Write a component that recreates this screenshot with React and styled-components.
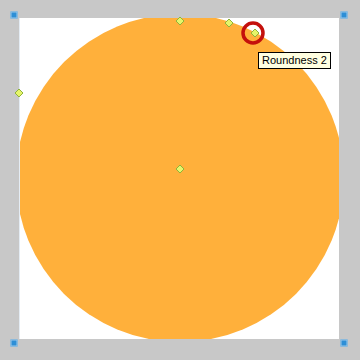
import React from 'react';
import styled, { createGlobalStyle } from 'styled-components';

const GlobalStyle = createGlobalStyle`
  html, body {
    margin: 0;
    padding: 0;
    background: #c8c8c8;
  }
`;

const Stage = styled.div`
  width: 360px;
  height: 360px;
  box-sizing: border-box;
  padding: 18px 0 0 20px;
  background: #c8c8c8;
  font-family: "Liberation Sans", "DejaVu Sans", sans-serif;
`;

const Canvas = styled.div`
  position: relative;
  width: 319px;
  height: 321px;
  background: #ffffff;
  box-shadow: -1px 0 0 #e4ecf4;
`;

const Drawing = styled.svg`
  display: block;
  width: 100%;
  height: 100%;
`;

const Overlay = styled.svg`
  position: absolute;
  left: 0;
  top: 0;
  width: 100%;
  height: 100%;
  overflow: visible;
  pointer-events: none;
`;

const CornerHandle = styled.span`
  position: absolute;
  left: ${p => p.$x}px;
  top: ${p => p.$y}px;
  width: 5px;
  height: 5px;
  background: #2e8fd6;
  border: 1px solid #9cc8ea;
  box-sizing: content-box;
  transform: translate(-50%, -50%);
`;

const Tooltip = styled.div`
  position: absolute;
  left: 238px;
  top: 34px;
  padding: 1px 3px 1px 3px;
  background: #ffffe1;
  border: 1px solid #000000;
  color: #000000;
  font-family: "Liberation Sans", "DejaVu Sans", sans-serif;
  font-size: 11px;
  line-height: 13px;
  white-space: nowrap;
`;

const diamonds = [
  [160, 3],
  [209, 5],
  [235, 15],
  [-1, 75],
  [160, 151],
];

const corners = [
  [-6, -3],
  [324, -3],
  [-6, 325],
  [324, 325],
];

const Diamond = ({ x, y }) => (
  <polygon
    points={`${x},${y - 4} ${x + 4},${y} ${x},${y + 4} ${x - 4},${y}`}
    fill="#e6f56a"
    stroke="#8fb33a"
    strokeWidth="1"
  />
);

export default function App() {
  return (
    <>
      <GlobalStyle />
      <Stage>
        <Canvas>
          <Drawing viewBox="0 0 319 321">
            <circle cx="160" cy="160" r="164" fill="#ffb03b" />
          </Drawing>
          <Overlay viewBox="0 0 319 321">
            {diamonds.map(([x, y], i) => (
              <Diamond key={i} x={x} y={y} />
            ))}
            <circle cx="233" cy="15" r="10" fill="none" stroke="#c4100c" strokeWidth="3.5" />
          </Overlay>
          {corners.map(([x, y], i) => (
            <CornerHandle key={i} $x={x} $y={y} />
          ))}
          <Tooltip>Roundness 2</Tooltip>
        </Canvas>
      </Stage>
    </>
  );
}
